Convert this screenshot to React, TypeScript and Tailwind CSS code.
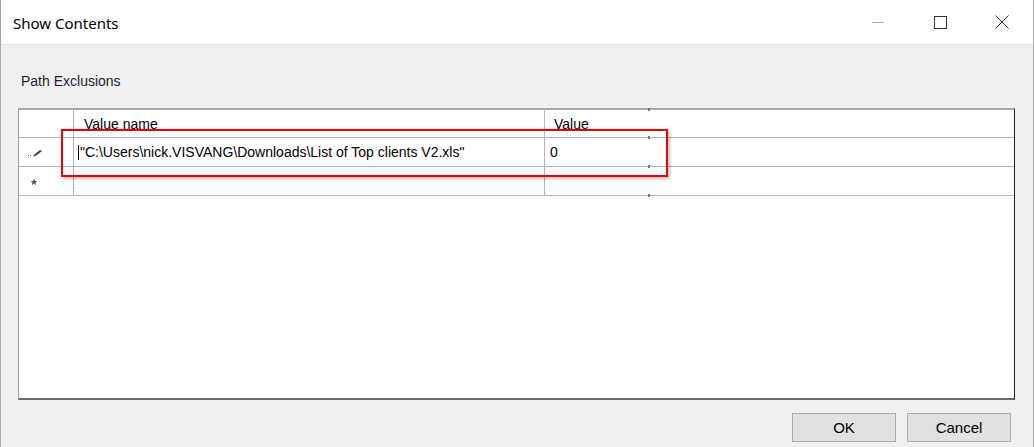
import React from 'react';

function TitleBar() {
  return (
    <div className="h-[45px] bg-white flex items-center border-b border-[#e3e3e3]">
      <div className="pl-[12px] pt-[3px] text-[15px] text-black font-['Noto_Sans',sans-serif] flex-1">Show Contents</div>
      {/* window controls */}
      <div className="flex h-full items-center">
        <div className="w-[62px] h-full flex items-center justify-center">
          <div className="w-[12px] h-px bg-[#b0b0b0]" />
        </div>
        <div className="w-[62px] h-full flex items-center justify-center">
          <div className="w-[13px] h-[13px] border border-[#333]" />
        </div>
        <div className="w-[62px] h-full flex items-center justify-center">
          <svg width="14" height="14" viewBox="0 0 14 14">
            <path d="M0.5 0.5 L13.5 13.5 M13.5 0.5 L0.5 13.5" stroke="#333" strokeWidth="1" />
          </svg>
        </div>
      </div>
    </div>
  );
}

function PencilIcon() {
  return (
    <svg width="16" height="8" viewBox="0 0 16 8">
      <rect x="0" y="6" width="1" height="1" fill="#777" />
      <rect x="2" y="6" width="1" height="1" fill="#777" />
      <path d="M5 7 L7 5 L12 1 L14 2 L9 6 L6 7.5 Z" fill="#444" />
    </svg>
  );
}

function StarIcon() {
  return (
    <svg width="8" height="8" viewBox="0 0 8 8">
      <path d="M4 0.5 L5 3 L7.5 3 L5.5 4.6 L6.3 7.2 L4 5.6 L1.7 7.2 L2.5 4.6 L0.5 3 L3 3 Z" fill="#555" />
    </svg>
  );
}

function Dot({ top }: { top: number }) {
  return <div className="absolute left-[629px] w-[2px] h-[3px] bg-[#777]" style={{ top }} />;
}

export default function App() {
  return (
    <div className="w-[1034px] h-[447px] flex flex-col border-l border-r border-[#a8a8a8] bg-[#f0f0f0] overflow-hidden font-['Liberation_Sans',Arial,sans-serif] text-[14px] text-black">
      <TitleBar />

      <div className="flex-1 flex flex-col pl-[17px] pr-[18px]">
        <div className="pt-[28px] pl-[3px] leading-[16px] text-[14px] text-[#1c1c30]">Path Exclusions</div>

        {/* data grid */}
        <div className="mt-[19px] h-[292px] bg-white border-l border-[#a0a0a0] border-t-2 border-t-[#a8a8a8] border-r border-r-[#222] border-b-2 border-b-[#6a6a6a] relative">
          {/* header */}
          <div className="flex h-[28px] border-b border-[#b4b4b4]">
            <div className="w-[55px] border-r border-[#b4b4b4]" />
            <div className="w-[471px] border-r border-[#b4b4b4] pl-[10px] pt-[6px] leading-[16px]">Value name</div>
            <div className="w-[104px] pl-[9px] pt-[6px] leading-[16px]">Value</div>
          </div>
          {/* row 1 */}
          <div className="flex h-[29px] border-b border-[#b4b4b4]">
            <div className="w-[55px] border-r border-[#b4b4b4] flex items-center pl-[9px] pt-[2px]">
              <PencilIcon />
            </div>
            <div className="w-[471px] border-r border-[#b4b4b4] flex items-center pl-[4px] pt-[1px]">
              <span className="w-px h-[15px] bg-black mr-px" />
              <span>"C:\Users\nick.VISVANG\Downloads\List of Top clients V2.xls"</span>
            </div>
            <div className="w-[104px] flex items-center pl-[5px] pt-[1px]">0</div>
          </div>
          {/* new row */}
          <div className="flex h-[29px] border-b border-[#b4b4b4]">
            <div className="w-[55px] border-r border-[#b4b4b4] flex items-center pl-[11px] pt-[1px]">
              <StarIcon />
            </div>
            <div className="w-[471px] border-r border-[#b4b4b4]" />
            <div className="w-[104px]" />
          </div>

          {/* column edge marks */}
          <Dot top={-2} />
          <Dot top={26} />
          <Dot top={55} />
          <Dot top={84} />

          {/* highlight */}
          <div className="absolute left-[42px] top-[19px] w-[607px] h-[48px] border-2 border-[#f00000] shadow-[2px_2px_3px_rgba(0,0,0,0.25)]" />
        </div>

        {/* buttons */}
        <div className="mt-[13px] flex justify-end gap-[11px] pr-[4px]">
          <button className="w-[104px] h-[29px] bg-[#e1e1e1] border border-[#adadad] text-[15px] leading-none">OK</button>
          <button className="w-[104px] h-[29px] bg-[#e1e1e1] border border-[#adadad] text-[15px] leading-none">Cancel</button>
        </div>
      </div>
    </div>
  );
}
